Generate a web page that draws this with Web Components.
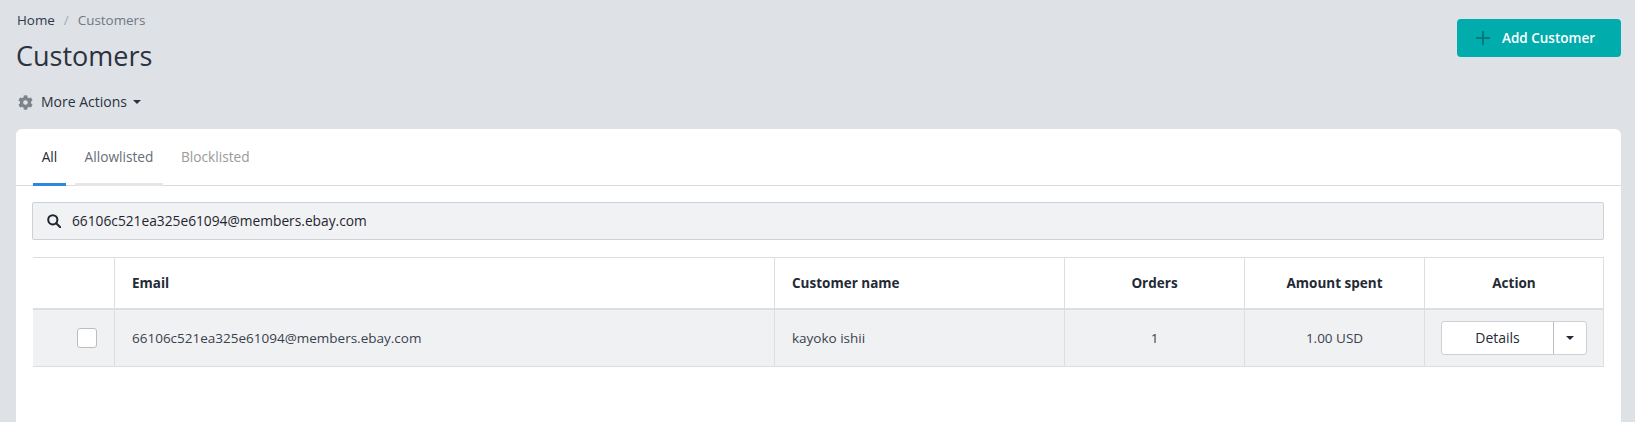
<!DOCTYPE html>
<html>
<head>
<meta charset="utf-8">
<title>Customers</title>
<style>
  html, body { margin: 0; height: 100%; }
  body {
    background: #dee1e6;
    color: #2b3240;
    font-family: "Open Sans", "Liberation Sans", sans-serif;
    font-size: 14px;
    overflow: hidden;
  }
</style>
</head>
<body>
<customers-page></customers-page>

<script>
class PageHeader extends HTMLElement{
    constructor(){
        super();
        this.attachShadow({mode: 'open'});
        this.shadowRoot.innerHTML = `
            <style>
                :host{ display: flex; justify-content: space-between; align-items: flex-start; height: 129px; padding: 0 14px 0 17px; box-sizing: border-box; }
                .crumbs{ display: flex; font-size: 13.4px; line-height: 20px; padding-top: 10px; color: #2f3a4a; }
                .crumbs i{ font-style: normal; color: #a5abb5; margin: 0 9px; }
                .crumbs span:last-child{ color: #6f7784; }
                h1{ margin: 8px 0 0 -1px; font-size: 27px; font-weight: 400; line-height: 36px; color: #2b3240; }
                .more{ display: flex; align-items: center; margin-top: 18px; line-height: 20px; color: #2b3240; }
                .more svg.gear{ margin: 0 8px 0 1px; }
                .more svg.caret{ margin-left: 6px; }
                button{
                    width: 164px; height: 38px; margin-top: 19px; border: 0; border-radius: 4px;
                    background: #00acac; color: #fff; font: 600 13.5px "Open Sans", sans-serif;
                    display: flex; align-items: center; padding: 0 0 0 19px; cursor: pointer;
                }
                button svg{ margin-right: 12px; }
            </style>
            <div>
                <div class="crumbs"><span>Home</span><i>/</i><span>Customers</span></div>
                <h1>Customers</h1>
                <div class="more">
                    <svg class="gear" width="15" height="15" viewBox="0 0 512 512" fill="#7d838d"><path d="M487 316l-42-25a190 190 0 0 0 0-70l42-25c5-3 7-9 5-14-11-35-30-67-54-93-4-4-10-5-15-2l-42 24a188 188 0 0 0-61-35V28c0-6-4-10-9-11a224 224 0 0 0-108 0c-5 1-9 5-9 11v48a194 194 0 0 0-61 35L91 87c-5-3-11-2-15 2-24 26-43 58-54 93-2 5 0 11 5 14l42 25a190 190 0 0 0 0 70l-42 25c-5 3-7 9-5 14 11 35 30 67 54 93 4 4 10 5 15 2l42-24a188 188 0 0 0 61 35v48c0 6 4 10 9 11a224 224 0 0 0 108 0c5-1 9-5 9-11v-48a194 194 0 0 0 61-35l42 24c5 3 11 2 15-2 24-26 43-58 54-93 2-5 0-11-5-14zM256 336a80 80 0 1 1 0-160 80 80 0 0 1 0 160z"/></svg>
                    <span>More Actions</span>
                    <svg class="caret" width="8" height="4" viewBox="0 0 8 4" fill="#2b3240"><path d="M0 0h8L4 4z"/></svg>
                </div>
            </div>
            <button>
                <svg width="14" height="14" viewBox="0 0 14 14" fill="#047a7d"><path d="M6 0h2v6h6v2H8v6H6V8H0V6h6z"/></svg>
                <slot>Add Customer</slot>
            </button>
        `;
    }
}
customElements.define('page-header', PageHeader);

class TabBar extends HTMLElement{
    constructor(){
        super();
        this.attachShadow({mode: 'open'});
        this.shadowRoot.innerHTML = `
            <style>
                :host{ display: flex; height: 57px; padding-left: 17px; gap: 9px; border-bottom: 1px solid #d9dbde; box-sizing: border-box; }
                div{ height: 57px; box-sizing: border-box; line-height: 20px; font-size: 13.7px; border-bottom: 3px solid transparent; color: #666d78; font-weight: 500; }
                .all{ width: 33px; padding: 18px 0 0; text-align: center; color: #232a36; border-bottom-color: #2f87dd; }
                .allow{ width: 88px; padding: 18px 0 0; text-align: center; border-bottom-color: #e6e6e6; }
                .block{ color: #9a9a9a; padding: 18px 0 0 9px; }
            </style>
            <div class="all">All</div>
            <div class="allow">Allowlisted</div>
            <div class="block">Blocklisted</div>
        `;
    }
}
customElements.define('tab-bar', TabBar);

class SearchBox extends HTMLElement{
    constructor(){
        super();
        this.attachShadow({mode: 'open'});
        this.shadowRoot.innerHTML = `
            <style>
                :host{ display: flex; align-items: center; height: 38px; margin: 16px 17px 0 16px; padding: 0 0 1px 14px; box-sizing: border-box; background: #f1f2f4; border: 1px solid #cdd0d5; border-radius: 2px; color: #1f2530; font-size: 13.75px; }
                svg{ margin-right: 11px; }
            </style>
            <svg width="14" height="14" viewBox="0 0 14 14" fill="none" stroke="#1f2530" stroke-width="2"><circle cx="5.8" cy="5.8" r="4.6"/><path d="M9.2 9.2l4 4" stroke-linecap="round"/></svg>
            <slot></slot>
        `;
    }
}
customElements.define('search-box', SearchBox);

class CustomerTable extends HTMLElement{
    constructor(){
        super();
        this.attachShadow({mode: 'open'});
        this.shadowRoot.innerHTML = `
            <style>
                :host{ display: grid; grid-template-columns: 82px 660px 290px 180px 180px 179px; margin: 17px 0 0 17px; width: 1571px; box-sizing: border-box; border-top: 1px solid #dcdee1; font-size: 13.5px; }
                .c{ display: flex; align-items: center; box-sizing: border-box; border-right: 1px solid #dcdee1; padding-left: 17px; }
                .c.mid{ justify-content: center; padding: 0; }
                .h{ height: 52px; border-bottom: 2px solid #dcdee1; font-weight: 700; color: #232a36; }
                .r{ height: 57px; background: #f0f1f3; border-bottom: 1px solid #dcdee1; color: #3a414d; }
                .r.first{ justify-content: flex-end; padding: 0 17px 0 0; }
                .box{ width: 20px; height: 20px; box-sizing: border-box; background: #fff; border: 1px solid #bbbdc1; border-radius: 3px; }
                .btn{ display: flex; height: 34px; background: #fff; border: 1px solid #cdd0d5; border-radius: 3px; box-sizing: border-box; color: #232a36; font-size: 14px; }
                .btn span{ width: 111px; padding-bottom: 1px; border-right: 1px solid #b9bdc3; display: flex; align-items: center; justify-content: center; }
                .btn b{ width: 32px; display: flex; align-items: center; justify-content: center; }
            </style>
            <div class="c h"></div>
            <div class="c h">Email</div>
            <div class="c h">Customer name</div>
            <div class="c h mid">Orders</div>
            <div class="c h mid">Amount spent</div>
            <div class="c h mid">Action</div>
            <div class="c r first"><div class="box"></div></div>
            <div class="c r">66106c521ea325e61094@members.ebay.com</div>
            <div class="c r">kayoko ishii</div>
            <div class="c r mid">1</div>
            <div class="c r mid">1.00 USD</div>
            <div class="c r mid">
                <div class="btn"><span>Details</span><b><svg width="8" height="4" viewBox="0 0 8 4" fill="#232a36"><path d="M0 0h8L4 4z"/></svg></b></div>
            </div>
        `;
    }
}
customElements.define('customer-table', CustomerTable);

class CustomersPage extends HTMLElement{
    constructor(){
        super();
        this.attachShadow({mode: 'open'});
        this.shadowRoot.innerHTML = `
            <style>
                :host{ display: block; }
                .card{ margin: 0 14px 0 16px; height: 293px; background: #fff; border-radius: 6px 6px 0 0; overflow: hidden; }
            </style>
            <page-header>Add Customer</page-header>
            <div class="card">
                <tab-bar></tab-bar>
                <search-box>66106c521ea325e61094@members.ebay.com</search-box>
                <customer-table></customer-table>
            </div>
        `;
    }
}
customElements.define('customers-page', CustomersPage);
</script>
</body>
</html>
